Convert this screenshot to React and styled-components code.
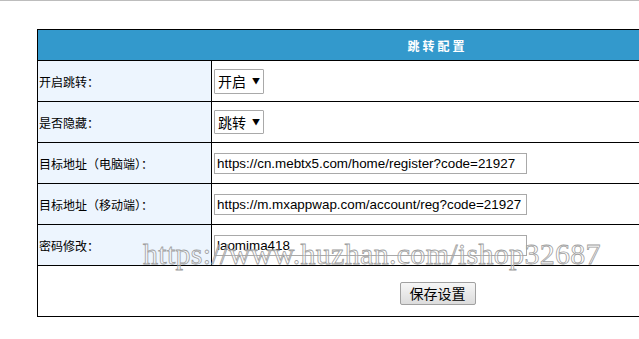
import React from "react";
import styled, { createGlobalStyle } from "styled-components";

const Global = createGlobalStyle`
  html, body { margin: 0; padding: 0; background: #fff; overflow: hidden; }
  body { font-family: "Noto Sans CJK SC", "Liberation Sans", sans-serif; font-size: 12px; color: #000; }
`;

const Page = styled.div`
  position: relative;
  width: 639px;
  height: 339px;
  overflow: hidden;
  border-top: 1px solid #bdbdbd;
  box-sizing: border-box;
  padding: 28px 0 0 37px;
`;

const Table = styled.table`
  border-collapse: collapse;
  width: 801px;
  table-layout: fixed;
`;

const Col = styled.col`
  width: ${(p) => (p.$w ? `${p.$w}px` : "auto")};
`;

const HeadCell = styled.th`
  background: #3399cc;
  color: #fff;
  height: 30px;
  padding: 0;
  border: 1px solid #000;
  font-size: 12px;
  font-weight: bold;
  letter-spacing: 3px;
  text-align: center;
  font-family: "Noto Sans CJK SC", sans-serif;
`;

const Row = styled.tr`
  height: ${(p) => p.$h}px;
`;

const Label = styled.td`
  background: #edf5fe;
  border: 1px solid #000;
  padding: 0 0 0 1px;
  font-size: 12px;
  vertical-align: middle;
  white-space: nowrap;
`;

const Field = styled.td`
  border: 1px solid #000;
  padding: 0 0 0 2px;
  vertical-align: middle;
`;

const Footer = styled.td`
  border: 1px solid #000;
  padding: 0;
  text-align: center;
  vertical-align: middle;
`;

const SelectBox = styled.div`
  display: inline-flex;
  align-items: center;
  box-sizing: border-box;
  height: ${(p) => p.$h}px;
  width: 50px;
  border: 1px solid #a9a9a9;
  border-radius: 1px;
  padding: 0 0 0 3px;
  gap: 6px;
  font-size: 14px;
  white-space: nowrap;
  font-family: "Noto Sans CJK SC", sans-serif;
  background: #fff;
  vertical-align: middle;
`;

const Arrow = styled.span`
  font-size: 8px;
  line-height: 1;
  flex-shrink: 0;
`;

const TextInput = styled.input`
  box-sizing: border-box;
  width: 313px;
  height: 21px;
  border: 1px solid #a9a9a9;
  padding: 0 0 0 2px;
  font-family: "Liberation Sans", Arial, sans-serif;
  font-size: 13.4px;
  color: #000;
  outline: none;
  margin: 0;
  display: block;
`;

const Button = styled.button`
  box-sizing: border-box;
  width: 76px;
  height: 23px;
  border: 1px solid #a0a0a0;
  border-radius: 2px;
  background: linear-gradient(#f6f6f6, #dcdcdc);
  font-family: "Noto Sans CJK SC", sans-serif;
  font-size: 14px;
  color: #000;
  padding: 0;
  margin-top: 4px;
`;

const Watermark = styled.div`
  position: absolute;
  left: 143px;
  top: 238px;
  font-family: "Liberation Serif", "Times New Roman", serif;
  font-size: 30px;
  letter-spacing: 0.3px;
  color: rgba(255, 255, 255, 0.35);
  -webkit-text-stroke: 0.8px #a0a0a0;
  white-space: nowrap;
  pointer-events: none;
  line-height: 1;
`;

export default function App() {
  return (
    <>
      <Global />
      <Page>
        <Table>
          <colgroup>
            <Col $w={174} />
            <Col />
          </colgroup>
          <thead>
            <tr>
              <HeadCell colSpan={2}>跳转配置</HeadCell>
            </tr>
          </thead>
          <tbody>
            <Row $h={41}>
              <Label>开启跳转：</Label>
              <Field>
                <SelectBox $h={25}>开启<Arrow>▼</Arrow></SelectBox>
              </Field>
            </Row>
            <Row $h={41}>
              <Label>是否隐藏：</Label>
              <Field>
                <SelectBox $h={24}>跳转<Arrow>▼</Arrow></SelectBox>
              </Field>
            </Row>
            <Row $h={41}>
              <Label>目标地址（电脑端）：</Label>
              <Field>
                <TextInput defaultValue="https://cn.mebtx5.com/home/register?code=21927" />
              </Field>
            </Row>
            <Row $h={41}>
              <Label>目标地址（移动端）：</Label>
              <Field>
                <TextInput defaultValue="https://m.mxappwap.com/account/reg?code=21927" />
              </Field>
            </Row>
            <Row $h={41}>
              <Label>密码修改：</Label>
              <Field>
                <TextInput defaultValue="laomima418" />
              </Field>
            </Row>
            <Row $h={51}>
              <Footer colSpan={2}>
                <Button>保存设置</Button>
              </Footer>
            </Row>
          </tbody>
        </Table>
        <Watermark>https://www.huzhan.com/ishop32687</Watermark>
      </Page>
    </>
  );
}
